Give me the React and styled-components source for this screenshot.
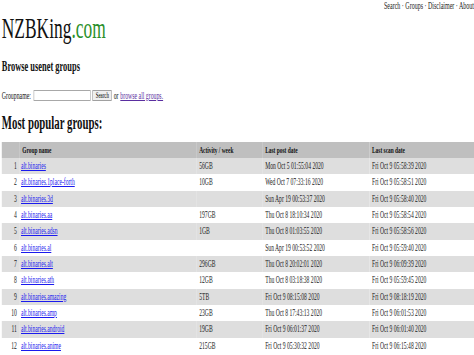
import styled, { createGlobalStyle } from 'styled-components';

const GlobalStyle = createGlobalStyle`
  html, body {
    margin: 0;
    padding: 0;
    overflow: hidden;
    background: #ffffff;
  }
  body {
    font-family: "Liberation Serif", "Times New Roman", serif;
    color: #111;
  }
`;

const groups = [
  { name: 'alt.binaries', activity: '56GB', post: 'Mon Oct 5 01:55:04 2020', scan: 'Fri Oct 9 05:58:39 2020' },
  { name: 'alt.binaries.1place-forth', activity: '10GB', post: 'Wed Oct 7 07:33:16 2020', scan: 'Fri Oct 9 05:58:51 2020' },
  { name: 'alt.binaries.3d', activity: '', post: 'Sun Apr 19 00:53:37 2020', scan: 'Fri Oct 9 05:58:40 2020' },
  { name: 'alt.binaries.aa', activity: '197GB', post: 'Thu Oct 8 18:10:34 2020', scan: 'Fri Oct 9 05:58:54 2020' },
  { name: 'alt.binaries.adsn', activity: '1GB', post: 'Thu Oct 8 01:03:55 2020', scan: 'Fri Oct 9 05:58:56 2020' },
  { name: 'alt.binaries.al', activity: '', post: 'Sun Apr 19 00:53:52 2020', scan: 'Fri Oct 9 05:59:40 2020' },
  { name: 'alt.binaries.alt', activity: '296GB', post: 'Thu Oct 8 20:02:01 2020', scan: 'Fri Oct 9 06:09:39 2020' },
  { name: 'alt.binaries.ath', activity: '12GB', post: 'Thu Oct 8 03:18:38 2020', scan: 'Fri Oct 9 05:59:45 2020' },
  { name: 'alt.binaries.amazing', activity: '5TB', post: 'Fri Oct 9 08:15:08 2020', scan: 'Fri Oct 9 08:18:19 2020' },
  { name: 'alt.binaries.amp', activity: '23GB', post: 'Thu Oct 8 17:43:13 2020', scan: 'Fri Oct 9 06:01:53 2020' },
  { name: 'alt.binaries.android', activity: '19GB', post: 'Fri Oct 9 06:01:37 2020', scan: 'Fri Oct 9 06:01:40 2020' },
  { name: 'alt.binaries.anime', activity: '215GB', post: 'Fri Oct 9 05:30:32 2020', scan: 'Fri Oct 9 06:15:48 2020' },
];

// the screenshot is squeezed sideways, so the page is laid out wide and narrowed
const Page = styled.div`
  width: 790px;
  padding: 0 0 0 3px;
  box-sizing: border-box;
  transform: scaleX(0.6);
  transform-origin: 0 0;
`;

const TopNav = styled.div`
  height: 12px;
  line-height: 12px;
  font-size: 10px;
  text-align: right;
  color: #222;
`;

const Logo = styled.div`
  font-size: 29px;
  line-height: 32px;
  color: #111;

  span {
    color: #2a8f2a;
  }
`;

const SubTitle = styled.div`
  margin-top: 15px;
  font-size: 14px;
  line-height: 16px;
  font-weight: bold;
`;

const SearchRow = styled.form`
  margin-top: 14px;
  height: 12px;
  display: flex;
  align-items: center;
  gap: 3px;
  font-size: 9.7px;
`;

const TextBox = styled.input`
  width: 95px;
  height: 11px;
  box-sizing: border-box;
  border: 1px solid #a8a8a8;
  padding: 0;
  margin: 0 0 0 2px;
`;

const Button = styled.button`
  width: 32px;
  height: 11px;
  box-sizing: border-box;
  padding: 0;
  border: 1px solid #a0a0a0;
  background: #efefef;
  font-family: inherit;
  font-size: 8px;
  line-height: 9px;
`;

const Link = styled.a`
  color: ${({ $visited }) => ($visited ? '#5a2ea0' : '#1a1aee')};
  text-decoration: underline;
`;

const Heading = styled.div`
  margin-top: 12px;
  font-size: 18px;
  line-height: 20px;
  font-weight: bold;
`;

const Table = styled.table`
  margin-top: 9px;
  width: 787px;
  table-layout: fixed;
  border-collapse: collapse;
  font-size: 9.4px;
`;

const HeadRow = styled.tr`
  height: 16px;
  background: #bfbfbf;

  th {
    font-size: 9px;
    font-weight: bold;
    text-align: left;
    padding: 0 0 0 4px;
    white-space: nowrap;
  }
`;

const Row = styled.tr`
  height: 16.33px;
  background: ${({ $odd }) => ($odd ? '#dedede' : '#ffffff')};

  td {
    padding: 0 0 0 4px;
    white-space: nowrap;
    color: #222;
  }
`;

const NumCell = styled.td`
  && {
    text-align: right;
    padding: 0 5px 0 0;
  }
`;

const GroupCell = styled.td`
  && {
    padding-left: 2px;
  }
`;

export default function App() {
  return (
    <>
      <GlobalStyle />
      <Page>
        <TopNav>Search · Groups · Disclaimer · About</TopNav>
        <Logo>
          NZBKing<span>.com</span>
        </Logo>
        <SubTitle>Browse usenet groups</SubTitle>
        <SearchRow onSubmit={(e) => e.preventDefault()}>
          Groupname:
          <TextBox type="text" />
          <Button type="submit">Search</Button>
          or <Link href="#" $visited>browse all groups.</Link>
        </SearchRow>
        <Heading>Most popular groups:</Heading>
        <Table>
          <colgroup>
            <col style={{ width: 30 }} />
            <col style={{ width: 295 }} />
            <col style={{ width: 110 }} />
            <col style={{ width: 178 }} />
            <col style={{ width: 174 }} />
          </colgroup>
          <thead>
            <HeadRow>
              <th></th>
              <th>Group name</th>
              <th>Activity / week</th>
              <th>Last post date</th>
              <th>Last scan date</th>
            </HeadRow>
          </thead>
          <tbody>
            {groups.map((g, i) => (
              <Row key={g.name} $odd={i % 2 === 0}>
                <NumCell>{i + 1}</NumCell>
                <GroupCell>
                  <Link href="#">{g.name}</Link>
                </GroupCell>
                <td>{g.activity}</td>
                <td>{g.post}</td>
                <td>{g.scan}</td>
              </Row>
            ))}
          </tbody>
        </Table>
      </Page>
    </>
  );
}
